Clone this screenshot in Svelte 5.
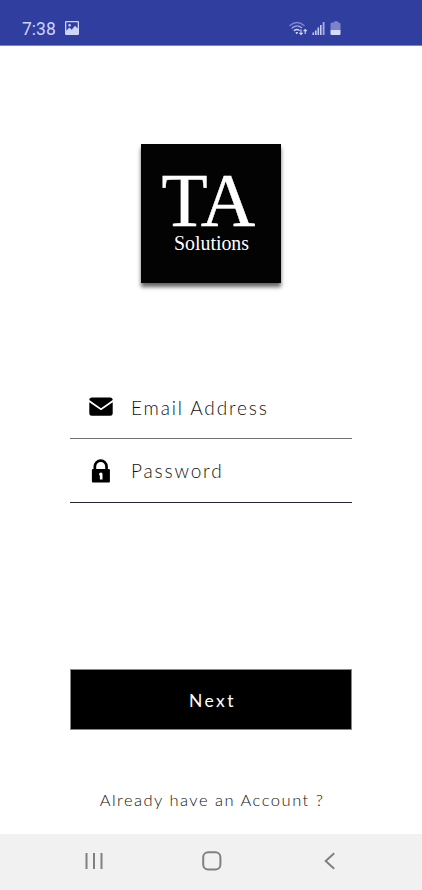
<script>
  let email = $state('');
  let password = $state('');
</script>

<div class="screen">
  <header>
    <span class="time">7:38</span>
    <svg class="photo" width="14" height="14" viewBox="0 0 14 14">
      <path fill="#d0d4f8" fill-rule="evenodd" d="M1.2 0h11.6Q14 0 14 1.2v11.6Q14 14 12.800 14H1.200Q0 14 0 12.800V1.200Q0 0 1.200 0ZM1.300 1.300v8.500L4.300 6.600l2.400 2.200L10 4.700l2.700 2.700V1.300ZM4.600 2.900a1.300 1.300 0 1 1 0 2.600a1.300 1.300 0 0 1 0-2.600Z" />
    </svg>
    <svg class="status" width="56" height="18" viewBox="0 0 56 18">
      <g fill="none" stroke-linecap="round" stroke-width="1.400">
        <path stroke="#8188ca" d="M2 5.500Q9-.5 16 5.500" />
        <path stroke="#a7addf" d="M4.200 8Q9 4 13.500 7.600" />
        <path stroke="#d3d7fa" d="M6.300 10.500Q8.800 8.500 11.200 10.200" />
      </g>
      <path fill="#e0e3ff" d="M7.300 12.500q1.500-1.200 3 0L8.800 14.200Z" />
      <path stroke="#d3d7fa" stroke-width="1.100" fill="none" d="M13 9.500v5m-1.600-1.700L13 14.500l1.600-1.700M17.200 14V9.500m-1.600 1.700 1.600-1.700 1.600 1.700" />
      <g fill="#c5caf5">
        <rect x="24.500" y="12.500" width="1.600" height="2.500" />
        <rect x="27" y="10.500" width="1.600" height="4.500" />
        <rect x="29.500" y="7.500" width="1.600" height="7.500" />
        <rect x="32" y="5" width="1.600" height="10" />
      </g>
      <rect x="34.700" y="2" width="1.800" height="13" fill="#a7addf" />
      <path fill="#7c83c8" d="M44 2.500h2V1.200h4v1.300h1q1.500 0 1.500 1.500v6h-10V4q0-1.500 1.500-1.500Z" />
      <path fill="#d7dafb" d="M42.500 10h10v4q0 1-1 1h-8q-1 0-1-1Z" />
    </svg>
  </header>

  <main>
    <div class="logo">
      <svg width="140" height="139" viewBox="0 0 140 139">
        <text class="initials" x="20.500 59.800" y="82.300" font-size="75.500">TA</text>
        <text x="33" y="106" font-size="20" textLength="75" lengthAdjust="spacingAndGlyphs">Solutions</text>
      </svg>
    </div>

    <form onsubmit={(e) => e.preventDefault()}>
      <label class="field email">
        <svg width="24" height="20" viewBox="0 0 24 20">
          <path d="M3 .5h18q2.700 0 2.700 2.500L12 11.200.3 3Q.3.500 3 .5ZM.3 5.200l11.700 8 11.700-8V16.500q0 2.200-2.400 2.200H2.700Q.3 18.700.3 16.500Z" />
        </svg>
        <input type="text" placeholder="Email Address" bind:value={email} />
      </label>
      <label class="field password">
        <svg width="24" height="24" viewBox="0 0 24 24">
          <path fill-rule="evenodd" d="M4.500 10V7.500a7.200 7.200 0 0 1 14.400 0V10h1q1 0 1 1v11.500q0 1-1 1h-16q-1 0-1-1V11q0-1 1-1ZM7.200 10h9V7.500a4.500 4.500 0 0 0-9 0ZM12 13.500a2 2 0 0 0-2 1.800q0 .9.900 1.200v4h2.600v-5.200a1.600 1.600 0 0 0-1.500-1.800Z" />
        </svg>
        <input type="password" placeholder="Password" bind:value={password} />
      </label>
      <button type="submit">Next</button>
    </form>

    <a class="account" href="#login">Already have an Account ?</a>
  </main>

  <nav>
    <svg width="18" height="18" viewBox="0 0 18 18"><path d="M1.500 1v16M9 1v16M16.500 1v16" /></svg>
    <svg width="20" height="20" viewBox="0 0 20 20"><rect x="1.200" y="1.200" width="17.200" height="17.200" rx="5" /></svg>
    <svg width="12" height="18" viewBox="0 0 12 18"><path d="M10.200 1.300 1.700 9l8.500 7.700" /></svg>
  </nav>
</div>

<style>
  .screen {
    width: 422px;
    height: 890px;
    display: flex;
    flex-direction: column;
    background: #fff;
    font-family: Lato, "Liberation Sans", sans-serif;
    overflow: hidden;
  }
  header {
    box-sizing: border-box;
    height: 46px;
    flex: none;
    display: flex;
    align-items: flex-start;
    padding: 18px 78px 0 22px;
    background: #303e9f;
    border-bottom: 1px solid #7c84bd;
  }
  .time {
    width: 43px;
    font: 400 17.5px/22px Roboto, sans-serif;
    color: #cfd3f8;
  }
  .photo { margin-top: 3px; }
  .status { margin: 2px 0 0 auto; }
  main {
    flex: 1;
    display: flex;
    flex-direction: column;
    align-items: center;
  }
  .logo {
    width: 140px;
    height: 139px;
    margin-top: 98px;
    background: #030303;
    box-shadow: 0 4px 4px rgba(0, 0, 0, 0.6);
  }
  .logo svg { display: block; }
  .logo text {
    font-family: "Liberation Serif", serif;
    fill: #fff;
  }
  .logo .initials {
    stroke: #fff;
    stroke-width: 0.5;
  }
  form {
    width: 282px;
    margin-top: 93px;
    display: flex;
    flex-direction: column;
  }
  .field {
    box-sizing: border-box;
    height: 63px;
    display: flex;
    align-items: center;
    padding-left: 19px;
    border-bottom: 1px solid #707070;
  }
  .password {
    height: 64px;
    border-color: #252631;
  }
  .field svg { flex: none; margin-right: 18px; }
  input {
    width: 210px;
    height: 28px;
    padding: 0;
    border: 0;
    outline: 0;
    background: transparent;
    font: 300 19px Lato, sans-serif;
    letter-spacing: 1.850px;
    color: #111;
  }
  input::placeholder { color: #111; opacity: 1; }
  button {
    height: 61px;
    margin: 166px 0 0;
    padding: 2px 0 0 3px;
    border: 1px solid #888;
    background: #000;
    color: #fff;
    font: 400 17.5px Lato, sans-serif;
    letter-spacing: 2.400px;
  }
  .account {
    margin-top: 59px;
    padding-left: 2px;
    font-weight: 300;
    font-size: 16.5px;
    line-height: 22px;
    letter-spacing: 1.500px;
    color: #111;
    text-decoration: none;
  }
  nav {
    box-sizing: border-box;
    height: 56px;
    flex: none;
    display: flex;
    align-items: center;
    justify-content: space-between;
    padding: 0 86px 2px 85px;
    background: #f1f1f1;
  }
  nav svg {
    fill: none;
    stroke: #808080;
    stroke-width: 2;
  }
  nav svg:nth-child(2) { margin-right: 3px; }
  nav svg:first-child { margin-right: -1px; }
</style>
